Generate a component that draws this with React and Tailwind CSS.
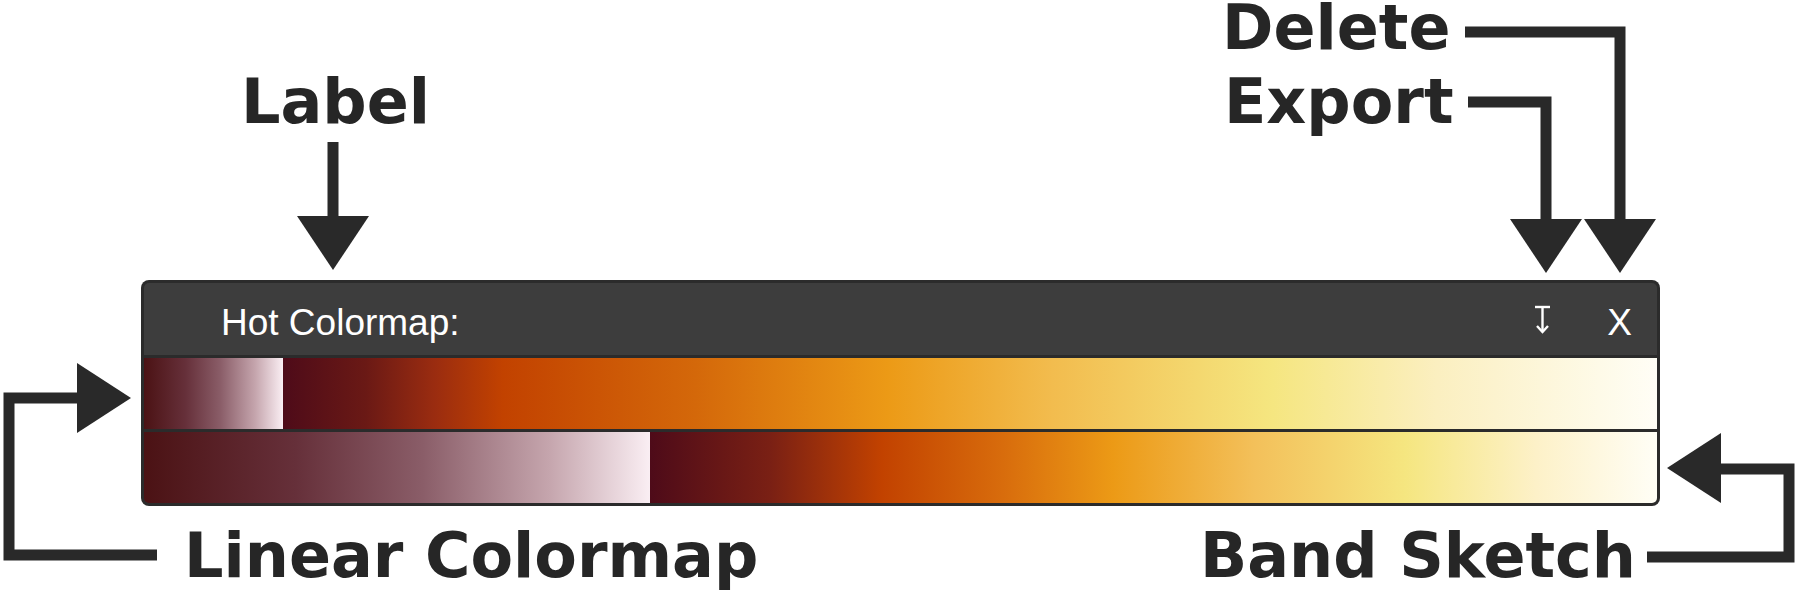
const INK = "#292929";

const ROW1 =
  "linear-gradient(to right, #4e0b19 0%, #6a1915 6%, #9a2c10 11%, #c24200 16%, #d4680a 30%, #ec9a16 44%, #f2bc4e 56%, #f5e680 72%, #fbefc0 84%, #fffef6 100%)";
const ROW2 =
  "linear-gradient(to right, #4e0b19 0%, #7a2014 12%, #c24200 23%, #d86c0c 35%, #ec9a16 46%, #f3c05a 60%, #f5e680 75%, #fdf1c8 88%, #fffef6 100%)";
const FADE =
  "linear-gradient(to right, #4b1214 0%, #66303a 30%, #8a5d68 55%, #c5a5ad 80%, #faeef3 100%)";

function Arrows() {
  return (
    <svg className="absolute inset-0" width="1803" height="595" viewBox="0 0 1803 595">
      <g fill="none" stroke={INK} strokeWidth="11" strokeLinejoin="miter">
        <path d="M333 142 V217" />
        <path d="M157 555 H9 V398 H79" />
        <path d="M1647 557 H1789 V469 H1719" />
        <path d="M1465 32 H1620 V221" />
        <path d="M1468 102 H1546 V221" />
      </g>
      <g fill={INK}>
        <polygon points="297,216 369,216 333,270" />
        <polygon points="77,363 131,398 77,433" />
        <polygon points="1721,433 1667,468 1721,503" />
        <polygon points="1584,219 1656,219 1620,273" />
        <polygon points="1510,219 1582,219 1546,273" />
      </g>
    </svg>
  );
}

function Callout({ className, children }) {
  return (
    <span
      className={`absolute whitespace-nowrap text-[62px] font-bold leading-[48px] text-[#262626] ${className}`}
      style={{ fontFamily: '"DejaVu Sans", sans-serif' }}
    >
      {children}
    </span>
  );
}

function ExportIcon() {
  return (
    <svg width="17" height="29" viewBox="0 0 17 29" fill="none" stroke="white" strokeWidth="2.4">
      <path d="M1 2 H16" />
      <path d="M8.5 2 V27" />
      <path d="M3 21 L8.5 27 L14 21" />
    </svg>
  );
}

function ColormapPanel() {
  return (
    <div className="flex w-[1519px] flex-col gap-[3px] rounded-[8px] bg-[#2b2b2b] p-[3px]">
      <div
        className="flex h-[72px] items-center rounded-t-[5px] bg-[#3d3d3d] pt-[7px] pl-[77px] pr-[25px] text-[37px] leading-none text-white"
        style={{ fontFamily: '"Liberation Sans", Arial, sans-serif' }}
      >
        <span className="flex-1">Hot Colormap:</span>
        <span className="mr-[56px] mt-[-6px] flex">
          <ExportIcon />
        </span>
        <span>X</span>
      </div>
      <div className="flex h-[71px]">
        <div className="w-[139px]" style={{ background: FADE }} />
        <div className="flex-1" style={{ background: ROW1 }} />
      </div>
      <div className="flex h-[71px] overflow-hidden rounded-b-[5px]">
        <div className="w-[506px]" style={{ background: FADE }} />
        <div className="flex-1" style={{ background: ROW2 }} />
      </div>
    </div>
  );
}

export default function App() {
  return (
    <div className="relative h-[595px] w-[1803px] overflow-hidden bg-white">
      <div className="pl-[141px] pt-[280px]">
        <ColormapPanel />
      </div>
      <Arrows />
      <Callout className="left-[241px] top-[78px]">Label</Callout>
      <Callout className="left-[1222px] top-[4px]">Delete</Callout>
      <Callout className="left-[1224px] top-[78px]">Export</Callout>
      <Callout className="left-[184px] top-[532px]">Linear Colormap</Callout>
      <Callout className="left-[1200px] top-[532px]">Band Sketch</Callout>
    </div>
  );
}
